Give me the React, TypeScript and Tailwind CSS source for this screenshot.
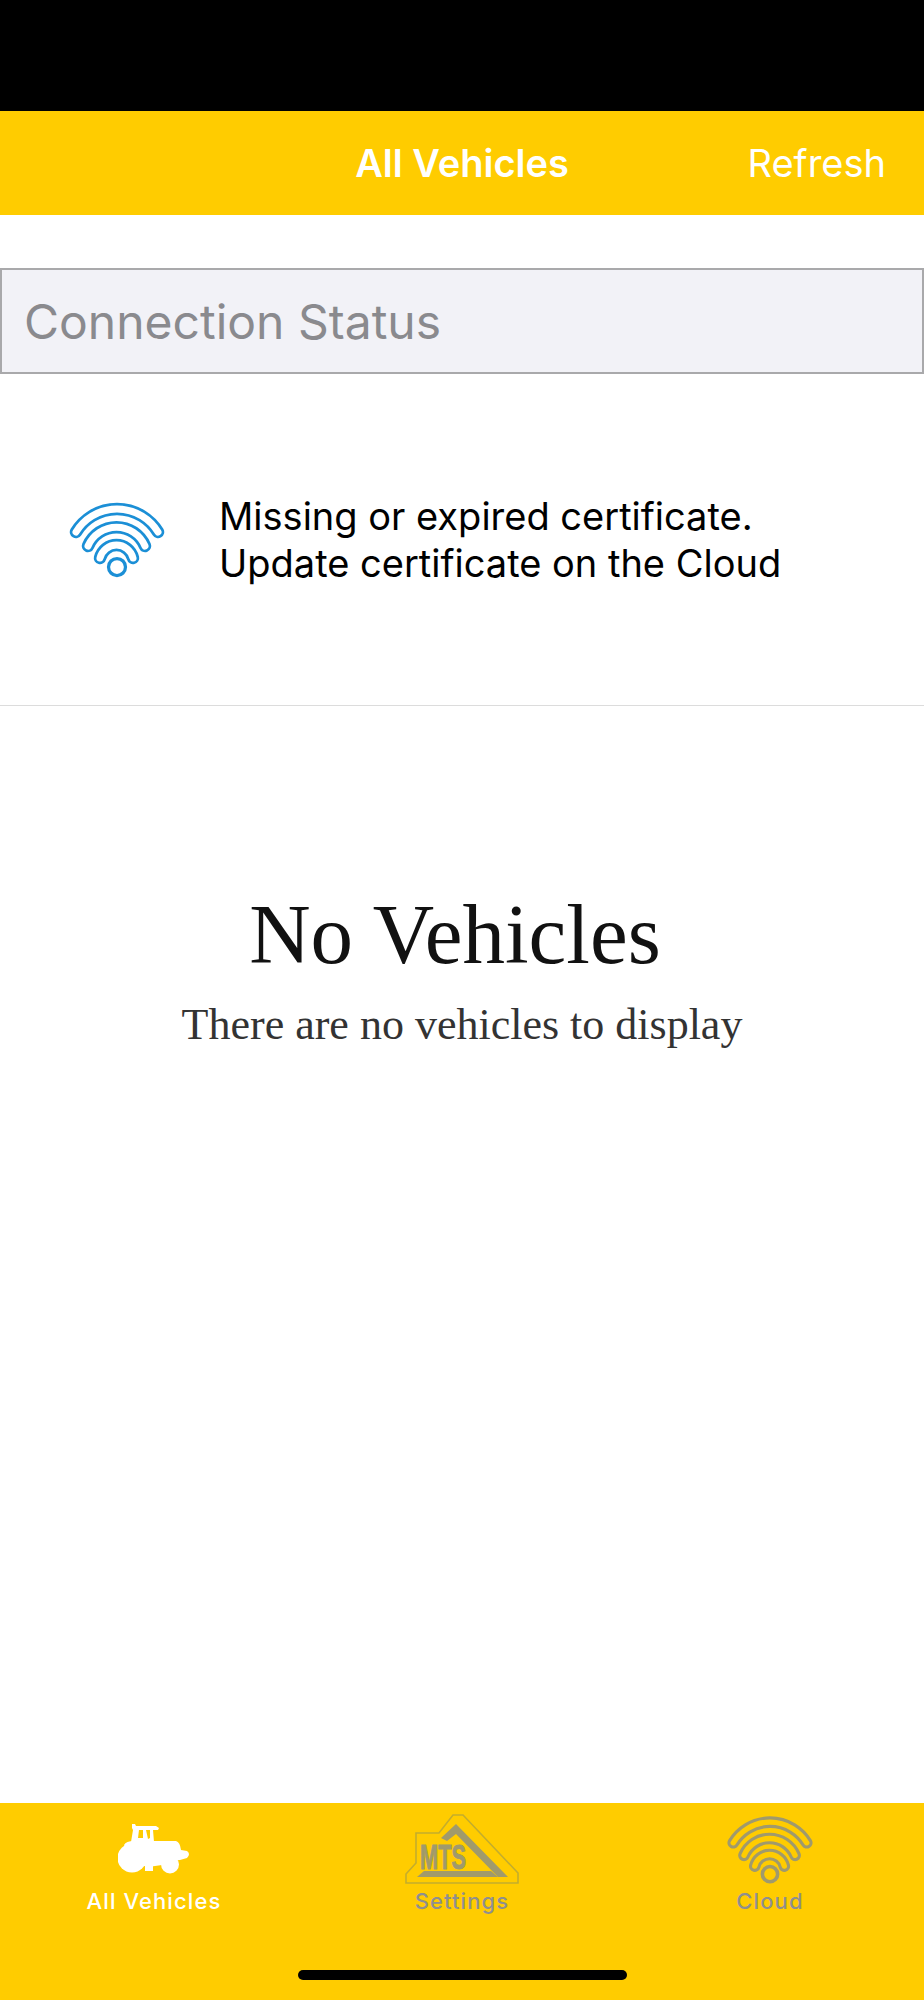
const inter = { fontFamily: "Inter, 'Liberation Sans', sans-serif" };

function Wifi({ className, line, fill, outer, inner }: { className: string; line: string; fill: string; outer: number; inner: number }) {
  const arcs = ["M36 52 A48 48 0 0 1 118 52", "M48 66 A31 31 0 0 1 105 66", "M60 78 A17 17 0 0 1 93 78"];
  return (
    <svg viewBox="29 21 96 77" className={className} fill="none" strokeLinecap="round">
      {arcs.map((d) => (
        <path key={d} d={d} stroke={line} strokeWidth={outer} />
      ))}
      {arcs.map((d) => (
        <path key={d + "i"} d={d} stroke={fill} strokeWidth={inner} />
      ))}
      <circle cx="77" cy="87" r="8.5" stroke={line} strokeWidth={(outer - inner) / 2 + 0.5} fill={fill} />
    </svg>
  );
}

function Tractor() {
  return (
    <svg viewBox="0 0 72 52" className="w-[72px] h-[52px]" fill="#fff" fillRule="evenodd">
      <circle cx="14" cy="35" r="14.5" />
      <circle cx="52" cy="41.5" r="9" />
      <path d="M6 22 Q8 18 16 18 L58 18 Q62 19 63 27 L69 28 Q73 31 69 35 L62 37 L50 38 L44 42 L30 44 L15 40 Z" />
      <path d="M14 5 L14 1 L17 1 L18 3 L38 3 L41 5 L40 7 L35 7 L36 19 L13 19 L15 7 Z M21 7 L20 15 L25 15 L25 7 Z M28 7 L30 16 L32 15 L32 7 Z" />
      <path d="M27 43 h8 v5 h-8 z" />
    </svg>
  );
}

function MtsLogo() {
  return (
    <svg viewBox="0 0 116 72" className="w-[116px] h-[72px]">
      <path
        d="M2 70 L2 61 L12 50 L12 20 L35 20 L49 2 L59 2 L114 60 L114 70 Z"
        fill="none"
        stroke="#c4ad2c"
        strokeWidth="1.6"
      />
      <path d="M37 25 L52 11 L104 64 L94 64 L52 21 L43 28 Z" fill="#a09a6c" />
      <path d="M13 64 L20 58 L87 58 L94 64 Z" fill="#a09a6c" />
      <text
        x="16"
        y="56"
        fontFamily="'Liberation Sans', sans-serif"
        fontWeight="700"
        fontSize="35"
        fill="#a09a6c"
        stroke="#a09a6c"
        strokeWidth="1"
        textLength="46"
        lengthAdjust="spacingAndGlyphs"
      >
        MTS
      </text>
    </svg>
  );
}

function Tab({ label, color, children }: { label: string; color: string; children: React.ReactNode }) {
  return (
    <div className="w-[308px] flex flex-col items-center">
      <div className="h-[75px] flex items-start justify-center">{children}</div>
      <span className={`text-[22px] leading-[26px] font-medium tracking-[1.1px] ${color}`} style={inter}>
        {label}
      </span>
    </div>
  );
}

export default function App() {
  return (
    <div className="relative w-[924px] h-[2000px] flex flex-col bg-white overflow-hidden" style={inter}>
      <div className="h-[111px] bg-black shrink-0" />
      <header className="h-[104px] shrink-0 bg-[#ffcc00] relative flex items-center justify-center text-white text-[38px]">
        <span className="font-semibold">All Vehicles</span>
        <span className="absolute right-[38px]">Refresh</span>
      </header>
      <div className="h-[53px] shrink-0" />
      <div className="h-[106px] shrink-0 bg-[#f2f2f7] border-2 border-[#a9a9ab] flex items-center pl-[22px] pt-[1px] text-[48px] text-[#8a8a8e]">
        Connection Status
      </div>
      <div className="h-[332px] shrink-0 border-b border-[#dcdcdc] flex items-center pl-[69px]">
        <Wifi className="w-[96px] h-[77px]" line="#1b8fd6" fill="#ffffff" outer={12.5} inner={7} />
        <p className="ml-[54px] text-[38px] leading-[47px] text-black">
          Missing or expired certificate.
          <br />
          Update certificate on the Cloud
        </p>
      </div>
      <main className="flex-1 flex flex-col items-center pt-[183px]" style={{ fontFamily: "'Liberation Serif', serif" }}>
        <h1 className="text-[85px] leading-[90px] text-[#111] -ml-[14px]">No Vehicles</h1>
        <p className="text-[44px] leading-[50px] text-[#333] mt-[21px]">There are no vehicles to display</p>
      </main>
      <nav className="h-[197px] shrink-0 bg-[#ffcc00] flex pt-[10px]">
        <Tab label="All Vehicles" color="text-white">
          <div className="mt-[10px]">
            <Tractor />
          </div>
        </Tab>
        <Tab label="Settings" color="text-[#8f8f8f]">
          <MtsLogo />
        </Tab>
        <Tab label="Cloud" color="text-[#8f8f8f]">
          <div className="mt-[2px]">
            <Wifi className="w-[86px] h-[69px]" line="#a09a6c" fill="#ffcc00" outer={13} inner={6} />
          </div>
        </Tab>
      </nav>
      <div className="absolute left-[298px] bottom-[20px] w-[329px] h-[10px] rounded-full bg-black" />
    </div>
  );
}
